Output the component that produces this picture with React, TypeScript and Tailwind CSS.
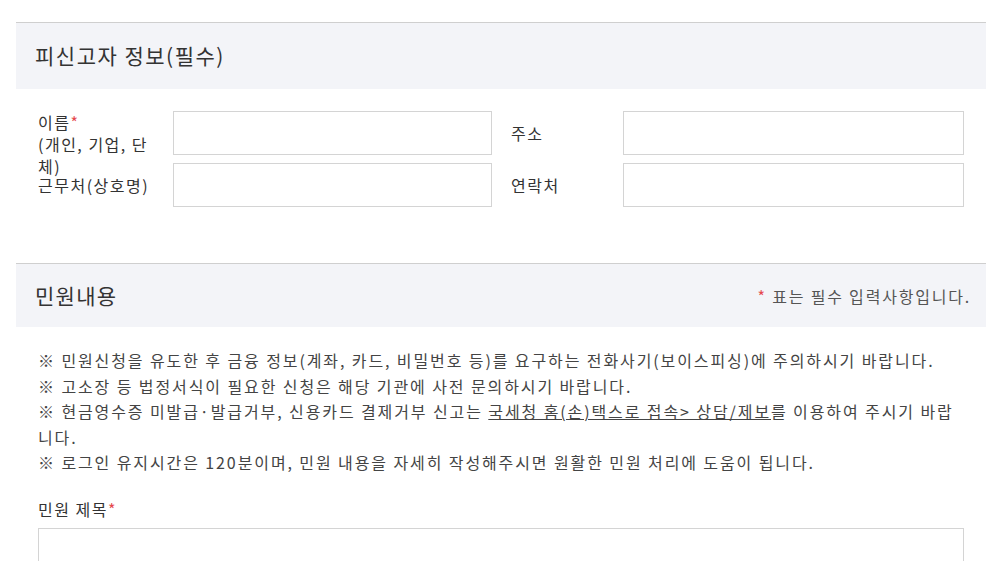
import React from "react";

const Star = () => <span className="text-[#e5484d]">*</span>;

export default function App() {
  return (
    <div className="w-[990px] h-[561px] overflow-hidden bg-white text-[#333] font-['Noto_Sans_CJK_KR','Noto_Sans',sans-serif]">
      <div className="pt-[22px] pl-[16px] pr-[4px]">
        {/* Section 1 header */}
        <div className="h-[67px] border-t border-[#cfcfcf] bg-[#f3f4f8] flex items-center pl-[19px]">
          <h2 className="text-[21px] tracking-[1.5px] font-normal text-[#333]">피신고자 정보(필수)</h2>
        </div>

        {/* Form rows */}
        <div className="mt-[22px] pl-[22px] pr-[22px] flex flex-col gap-[8px] text-[16px] tracking-[1.5px]">
          <div className="flex h-[44px]">
            <div className="w-[135px] shrink-0">
              <div className="w-[120px] leading-[22px]">
                이름<Star />
                <br />
                (개인, 기업, 단체)
              </div>
            </div>
            <input className="w-[319px] h-[44px] border border-[#d4d4d4] bg-white" />
            <div className="w-[131px] shrink-0 flex items-center pl-[19px]">주소</div>
            <input className="flex-1 h-[44px] border border-[#d4d4d4] bg-white" />
          </div>
          <div className="flex h-[44px]">
            <div className="w-[135px] shrink-0 flex items-center">근무처(상호명)</div>
            <input className="w-[319px] h-[44px] border border-[#d4d4d4] bg-white" />
            <div className="w-[131px] shrink-0 flex items-center pl-[19px]">연락처</div>
            <input className="flex-1 h-[44px] border border-[#d4d4d4] bg-white" />
          </div>
        </div>

        {/* Section 2 header */}
        <div className="mt-[56px] h-[64px] border-t border-[#cfcfcf] bg-[#f3f4f8] flex items-center justify-between pl-[19px] pr-[15px]">
          <h2 className="text-[21px] tracking-[1.3px] font-normal text-[#333]">민원내용</h2>
          <p className="text-[16px] tracking-[1.8px] text-[#555]">
            <Star /> 표는 필수 입력사항입니다.
          </p>
        </div>

        {/* Notes */}
        <div className="mt-[21px] pl-[22px] pr-[22px] text-[16px] tracking-[1.9px] leading-[25.5px] text-[#444]">
          <p>※ 민원신청을 유도한 후 금융 정보(계좌, 카드, 비밀번호 등)를 요구하는 전화사기(보이스피싱)에 주의하시기 바랍니다.</p>
          <p>※ 고소장 등 법정서식이 필요한 신청은 해당 기관에 사전 문의하시기 바랍니다.</p>
          <p>
            ※ 현금영수증 미발급·발급거부, 신용카드 결제거부 신고는{" "}
            <a className="underline">국세청 홈(손)택스로 접속&gt; 상담/제보</a>를 이용하여 주시기 바랍니다.
          </p>
          <p>※ 로그인 유지시간은 120분이며, 민원 내용을 자세히 작성해주시면 원활한 민원 처리에 도움이 됩니다.</p>
        </div>

        {/* Title field */}
        <div className="mt-[22px] pl-[22px] pr-[22px]">
          <div className="text-[16px] tracking-[1.5px] leading-[22px]">
            민원 제목<Star />
          </div>
          <input className="mt-[8px] w-full h-[44px] border border-[#d4d4d4] bg-white" />
        </div>
      </div>
    </div>
  );
}
